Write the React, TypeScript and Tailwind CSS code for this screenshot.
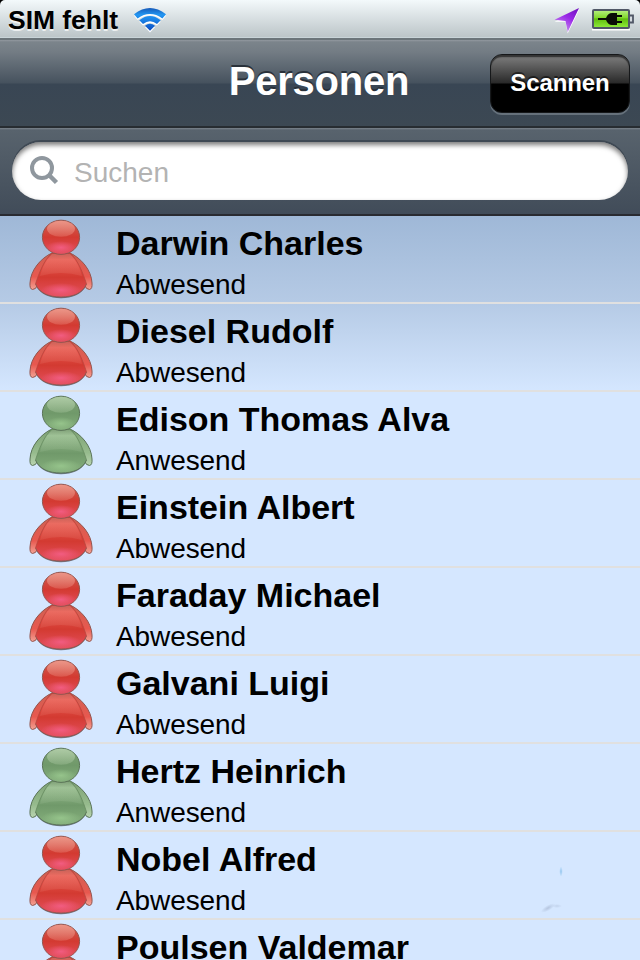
const people = [
  { name: "Darwin Charles", present: false },
  { name: "Diesel Rudolf", present: false },
  { name: "Edison Thomas Alva", present: true },
  { name: "Einstein Albert", present: false },
  { name: "Faraday Michael", present: false },
  { name: "Galvani Luigi", present: false },
  { name: "Hertz Heinrich", present: true },
  { name: "Nobel Alfred", present: false },
  { name: "Poulsen Valdemar", present: false },
];

const red = { edge: "#93564f", top: "#cf6153", mid: "#d33a31", low: "#e4505f", glow: "#f5608a", arm: "#e8584f", armEdge: "#b5453d", shine: "#f3a294" };
const green = { edge: "#5b7458", top: "#7fa376", mid: "#70996a", low: "#86b07d", glow: "#9ac98f", arm: "#96bb8d", armEdge: "#64885d", shine: "#b9d4b0" };

function Person({ present }: { present: boolean }) {
  const c = present ? green : red;
  const k = present ? "g" : "r";
  return (
    <svg className="block h-[86px] w-[72px] shrink-0" viewBox="24 0 72 86">
      <defs>
        <linearGradient id={k + "head"} x1="0" y1="0" x2="0" y2="1">
          <stop offset="0" stopColor={c.top} />
          <stop offset=".5" stopColor={c.mid} />
          <stop offset="1" stopColor={c.low} />
        </linearGradient>
        <linearGradient id={k + "body"} x1="0" y1="0" x2="0" y2="1">
          <stop offset="0" stopColor={c.armEdge} />
          <stop offset=".15" stopColor={c.arm} />
          <stop offset=".55" stopColor={c.mid} />
          <stop offset="1" stopColor={c.low} />
        </linearGradient>
        <linearGradient id={k + "shine"} x1="0" y1="0" x2="0" y2="1">
          <stop offset="0" stopColor={c.shine} stopOpacity=".8" />
          <stop offset="1" stopColor={c.shine} stopOpacity=".25" />
        </linearGradient>
        <linearGradient id={k + "bodyShine"} x1="0" y1="0" x2="0" y2="1">
          <stop offset="0" stopColor={c.shine} stopOpacity=".3" />
          <stop offset="1" stopColor={c.shine} stopOpacity=".12" />
        </linearGradient>
        <linearGradient id={k + "arm"} x1="0" y1="0" x2="0" y2="1">
          <stop offset="0" stopColor={c.top} />
          <stop offset=".65" stopColor={c.arm} />
          <stop offset="1" stopColor={c.shine} />
        </linearGradient>
        <radialGradient id={k + "glow"}>
          <stop offset="0" stopColor={c.glow} stopOpacity=".85" />
          <stop offset="1" stopColor={c.glow} stopOpacity="0" />
        </radialGradient>
      </defs>
      <path d="M36 70C40 78 50 82.300 61 82.300S82 78 86 70Z" fill="#343a42" opacity=".65" />
      <path d="M52 37C41 42 30.500 54 30 67Q29.500 73 32.500 73.500Q36 73.500 37.500 69L54 44Z" fill={`url(#${k}arm)`} stroke={c.edge} strokeWidth="1" />
      <path d="M70 37C81 42 91.500 54 92 67Q92.500 73 89.500 73.500Q86 73.500 84.500 69L68 44Z" fill={`url(#${k}arm)`} stroke={c.edge} strokeWidth="1" />
      <path d="M52 37H70C78 44 83 57 86.500 68C83 77 73 81 61 81S39 77 35.500 68C39 57 44 44 52 37Z" fill={`url(#${k}body)`} />
      <path d="M52 37C44 44 39 57 35.500 68M70 37C78 44 83 57 86.500 68" fill="none" stroke={c.armEdge} strokeWidth="1" opacity=".75" />
      <path d="M35.500 68C39 77 49 81 61 81S83 77 86.500 68" fill="none" stroke={c.edge} strokeWidth="1" />
      <ellipse cx="61" cy="74" rx="20" ry="7" fill={`url(#${k}glow)`} />
      <path d="M52 38H70C77 45 80 53 82 60Q61 54 40 60C42 53 45 45 52 38Z" fill={`url(#${k}bodyShine)`} />
      <ellipse cx="61" cy="21.300" rx="18.600" ry="17.100" fill={`url(#${k}head)`} stroke={c.edge} strokeWidth="1" />
      <ellipse cx="61" cy="31.500" rx="15" ry="6.500" fill={`url(#${k}glow)`} />
      <ellipse cx="61" cy="12.800" rx="14" ry="8" fill={`url(#${k}shine)`} />
    </svg>
  );
}

function Wifi() {
  const arcs = (
    <>
      <path d="M134 14.200Q150 1.800 166 14.200L162.400 18.400Q150 9.600 137.600 18.400Z" />
      <path d="M139.300 20.200Q150 11.600 160.700 20.200L157 24Q150 18.600 143 24Z" />
      <path d="M145 25.700Q150 21.700 155 25.700L150 30.800Z" />
    </>
  );
  return (
    <svg className="block h-[28px] w-[36px]" viewBox="132 6 36 28">
      <defs>
        <linearGradient id="wifi" gradientUnits="userSpaceOnUse" x1="0" y1="8" x2="0" y2="31">
          <stop offset="0" stopColor="#1559b8" />
          <stop offset=".3" stopColor="#2397f2" />
          <stop offset=".6" stopColor="#1879e0" />
          <stop offset="1" stopColor="#0a49c0" />
        </linearGradient>
      </defs>
      <g fill="#fff" transform="translate(0 1.600)">{arcs}</g>
      <g fill="url(#wifi)">{arcs}</g>
    </svg>
  );
}

function Arrow() {
  return (
    <svg className="mr-[10px] block h-[28px] w-[28px]" viewBox="553 6 28 28">
      <defs>
        <linearGradient id="arrow" x1="1" y1="0" x2=".4" y2="1">
          <stop offset="0" stopColor="#6f10bd" />
          <stop offset=".5" stopColor="#9b2be8" />
          <stop offset="1" stopColor="#c791ee" />
        </linearGradient>
      </defs>
      <path d="M579 10L554.500 21.700H565.500L567.700 33.500Z" fill="#fff" />
      <path d="M579 8L554.500 19.700L565.500 21L567.700 32Z" fill="url(#arrow)" />
    </svg>
  );
}

function Battery() {
  return (
    <svg className="block h-[26px] w-[44px]" viewBox="591 7 44 26">
      <defs>
        <linearGradient id="battery" x1="0" y1="0" x2="0" y2="1">
          <stop offset="0" stopColor="#b8ef83" />
          <stop offset=".42" stopColor="#83d92f" />
          <stop offset=".5" stopColor="#5fbd0c" />
          <stop offset="1" stopColor="#91ee3c" />
        </linearGradient>
      </defs>
      <path d="M592 29.500H630" stroke="#fff" strokeWidth="2" />
      <rect x="593" y="10" width="36" height="18" rx="1" fill="url(#battery)" stroke="#505766" strokeWidth="2" />
      <path d="M630 15.500H633V22.500H630" fill="#d5dbe0" stroke="#505766" strokeWidth="1.800" />
      <path d="M598 18H606Q608 13 612 13H617V15H622V17H617V21H622V23H617V25H612Q608 25 606 20H598Z" fill="#0a0d06" />
    </svg>
  );
}

export default function App() {
  return (
    <div className="flex h-[960px] w-[640px] flex-col overflow-hidden bg-black font-['Liberation_Sans',Arial,sans-serif]">
      <header className="flex h-10 shrink-0 items-start rounded-t-[5px] border-b-2 border-[#6c757a] bg-linear-to-b from-[#f3f9fb] to-[#bbc4c7] pl-2 pr-[5px] shadow-[inset_0_-1px_0_#c9d4d8]">
        <span className="mt-[5px] text-[26.5px] leading-[30px] font-bold tracking-[-0.05px] text-black [text-shadow:0_2px_0_#ffffffb0]">SIM fehlt</span>
        <div className="ml-[14px] mt-[6px]"><Wifi /></div>
        <div className="ml-auto mt-[6px]"><Arrow /></div>
        <div className="mt-[7px]"><Battery /></div>
      </header>

      <nav className="grid h-22 shrink-0 grid-cols-[150px_1fr_150px] border-b-2 border-[#272c31] bg-[linear-gradient(to_bottom,#9299a0_0,#7b848b_2px,#737c84_12px,#46525e_43px,#394654_44px,#3c4853_86px)]">
        <h1 className="col-start-2 mt-[19px] pr-[2px] text-center text-[40px] leading-[45px] font-bold tracking-[-0.25px] text-white [text-shadow:0_-2px_0_#29313a]">Personen</h1>
        <button className="mt-[14px] h-[59px] w-[140px] rounded-[12px] border border-[#16181a] bg-[linear-gradient(to_bottom,#606060_0,#737373_4px,#292929_28px,#000_29px)] pb-[2px] text-[24px] leading-[28px] font-bold tracking-[-0.1px] text-white shadow-[0_2px_0_#66717b,inset_0_2px_1px_#343434] [text-shadow:0_-2px_0_#00000080]">Scannen</button>
      </nav>

      <div className="h-22 shrink-0 border-b-2 border-[#292b31] bg-[linear-gradient(to_bottom,#7b848c_0,#58636d_2px,#414c59_86px)] px-3 pt-[14px]">
        <label className="flex h-[58px] items-center rounded-full bg-white pl-[17px] shadow-[0_-2px_0_#3e4853,inset_0_3px_5px_#00000085]">
          <svg className="block h-8 w-8" viewBox="0 0 32 32" fill="none" stroke="#8f979e">
            <circle cx="13" cy="13" r="10" strokeWidth="4" />
            <path d="M20 20L27.500 27.500" strokeWidth="4.500" />
          </svg>
          <span className="ml-[13px] mt-[3px] text-[28px] leading-8 text-[#b3b3b3]">Suchen</span>
        </label>
      </div>

      <main className="relative h-[744px] overflow-hidden bg-[linear-gradient(to_bottom,#9fb8d7_0,#b5cae5_86px,#d5e7ff_176px)]">
        <ul>
          {people.map((p) => (
            <li key={p.name} className="flex h-22 border-b-2 border-[#e0e0e0] pl-6">
              <Person present={p.present} />
              <div className="ml-[20px] pt-2 whitespace-nowrap text-black">
                <h2 className="text-[34px] leading-[38px] font-bold">{p.name}</h2>
                <p className="mt-[7px] text-[28px] leading-8 tracking-[-0.1px]">{p.present ? "Anwesend" : "Abwesend"}</p>
              </div>
            </li>
          ))}
        </ul>
        <svg className="absolute left-[535px] top-[645px] h-[60px] w-[40px]" viewBox="535 861 40 60">
          <defs>
            <radialGradient id="fleck"><stop stopColor="#79b9e7" stopOpacity=".75" /><stop offset="1" stopColor="#79b9e7" stopOpacity="0" /></radialGradient>
            <radialGradient id="smudge"><stop stopColor="#9baac6" stopOpacity=".55" /><stop offset="1" stopColor="#9baac6" stopOpacity="0" /></radialGradient>
          </defs>
          <ellipse cx="561" cy="871.500" rx="1.800" ry="5" fill="url(#fleck)" />
          <ellipse cx="548" cy="908" rx="8" ry="2.800" fill="url(#smudge)" transform="rotate(-30 548 908)" />
          <ellipse cx="557" cy="906" rx="5" ry="2" fill="url(#smudge)" opacity=".6" />
        </svg>
      </main>
    </div>
  );
}
